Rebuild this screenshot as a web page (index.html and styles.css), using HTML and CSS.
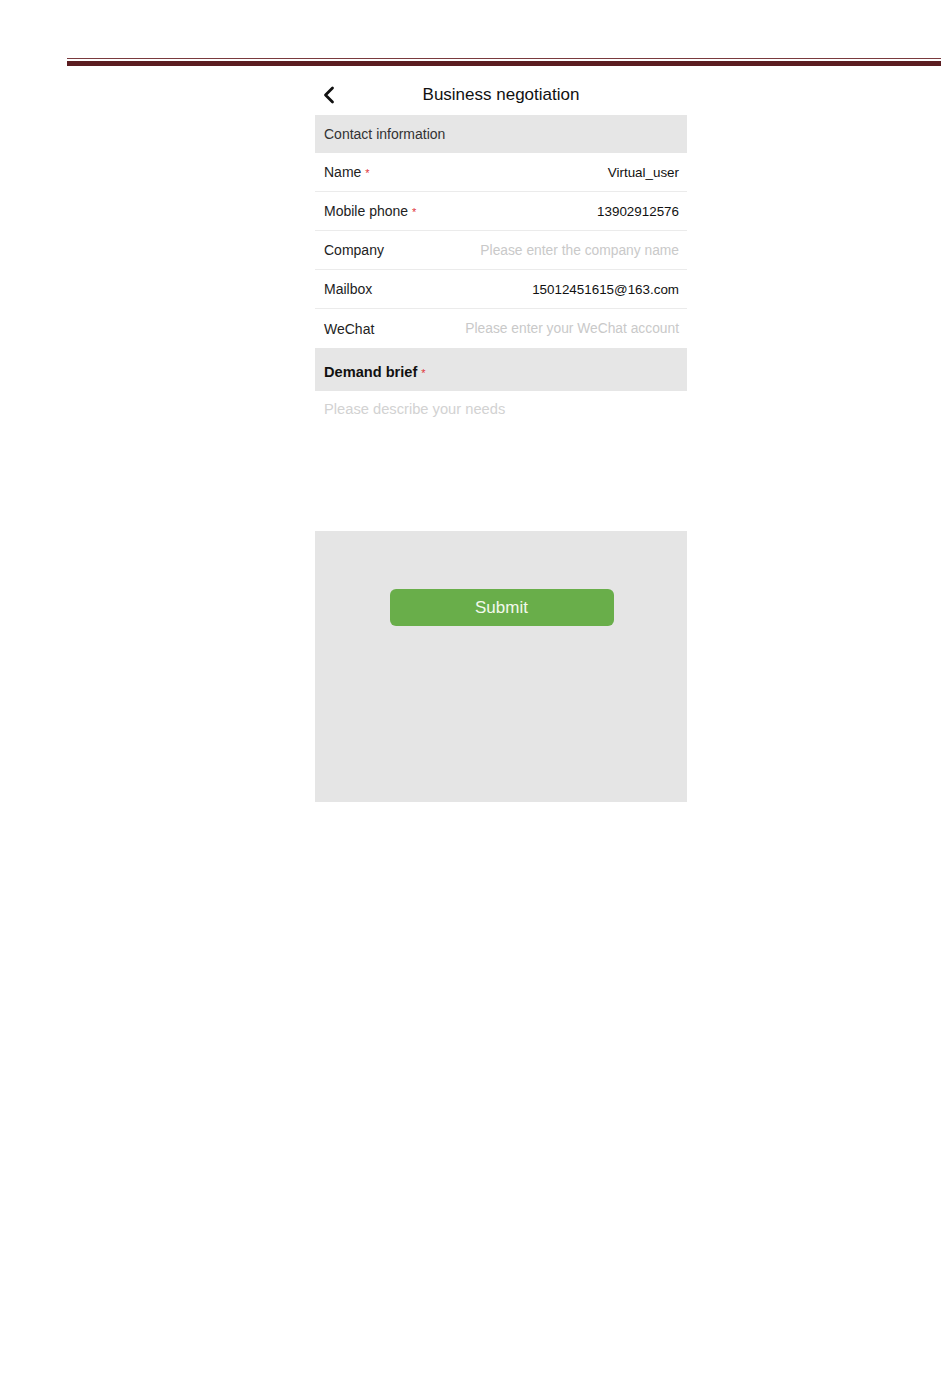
FILE: index.html
```html
<!DOCTYPE html>
<html lang="en">
<head>
    <meta charset="UTF-8">
    <meta name="viewport" content="width=device-width, initial-scale=1.0">
    <title>Business negotiation</title>
    <link rel="stylesheet" href="styles.css">
</head>
<body>
    <div class="page-rule">
        <div class="rule-thin"></div>
        <div class="rule-thick"></div>
    </div>

    <div class="phone">
        <div class="nav">
            <svg class="back" width="14" height="18" viewBox="0 0 14 18">
                <path d="M10.5 2 L3.5 9 L10.5 16" fill="none" stroke="#111" stroke-width="2.8" stroke-linecap="round" stroke-linejoin="round"/>
            </svg>
            <span class="nav-title">Business negotiation</span>
        </div>

        <div class="section">Contact information</div>

        <div class="row">
            <span class="label">Name <em>*</em></span>
            <span class="value">Virtual_user</span>
        </div>
        <div class="row">
            <span class="label">Mobile phone <em>*</em></span>
            <span class="value">13902912576</span>
        </div>
        <div class="row">
            <span class="label">Company</span>
            <span class="value placeholder">Please enter the company name</span>
        </div>
        <div class="row">
            <span class="label">Mailbox</span>
            <span class="value">15012451615@163.com</span>
        </div>
        <div class="row last">
            <span class="label">WeChat</span>
            <span class="value placeholder">Please enter your WeChat account</span>
        </div>

        <div class="section bold"><span>Demand brief <em>*</em></span></div>

        <div class="brief">Please describe your needs</div>

        <div class="footer">
            <button class="submit">Submit</button>
        </div>
    </div>
</body>
</html>
```

FILE: styles.css
```css
body {
    margin: 0;
    background: #fff;
    font-family: "Liberation Sans", Arial, sans-serif;
    color: #222;
}
.page-rule {
    margin: 58px 0 0 67px;
    width: 874px;
}
.rule-thin {
    height: 1px;
    background: #7a3a3e;
}
.rule-thick {
    height: 5px;
    margin-top: 2px;
    background: #5b1d21;
}
.phone {
    width: 372px;
    margin-left: 315px;
}
.nav {
    height: 49px;
    display: flex;
    align-items: center;
    justify-content: center;
    position: relative;
}
.back {
    position: absolute;
    left: 7px;
    top: 20px;
}
.nav-title {
    font-size: 17px;
    color: #111;
    margin-top: 8px;
}
.section {
    background: #e6e6e6;
    height: 38px;
    display: flex;
    align-items: center;
    padding-left: 9px;
    font-size: 14px;
    color: #333;
}
.section.bold {
    height: 43px;
    font-size: 14.6px;
    font-weight: bold;
    color: #111;
    padding-top: 4px;
    box-sizing: border-box;
}
em {
    font-style: normal;
    color: #e0343c;
    font-weight: normal;
    font-size: 11px;
}
.row {
    height: 38px;
    display: flex;
    align-items: center;
    justify-content: space-between;
    padding: 0 8px 0 9px;
    border-bottom: 1px solid #ebebeb;
    font-size: 14px;
}
.row.last {
    border-bottom: none;
    height: 39px;
}
.label {
    color: #222;
}
.value {
    color: #111;
    font-size: 13.4px;
}
.placeholder {
    color: #c9c9c9;
    font-size: 13.8px;
}
.brief {
    height: 140px;
    padding: 10px 9px 0;
    box-sizing: border-box;
    font-size: 14.7px;
    color: #d2d2d2;
}
.footer {
    background: #e5e5e5;
    height: 271px;
    padding-top: 58px;
    box-sizing: border-box;
    display: flex;
    justify-content: center;
    align-items: flex-start;
}
.submit {
    width: 224px;
    height: 37px;
    margin-left: 1px;
    background: #69ae4a;
    border: none;
    border-radius: 6px;
    color: #f2f9ec;
    font-family: "Liberation Sans", Arial, sans-serif;
    font-size: 17px;
}
```
